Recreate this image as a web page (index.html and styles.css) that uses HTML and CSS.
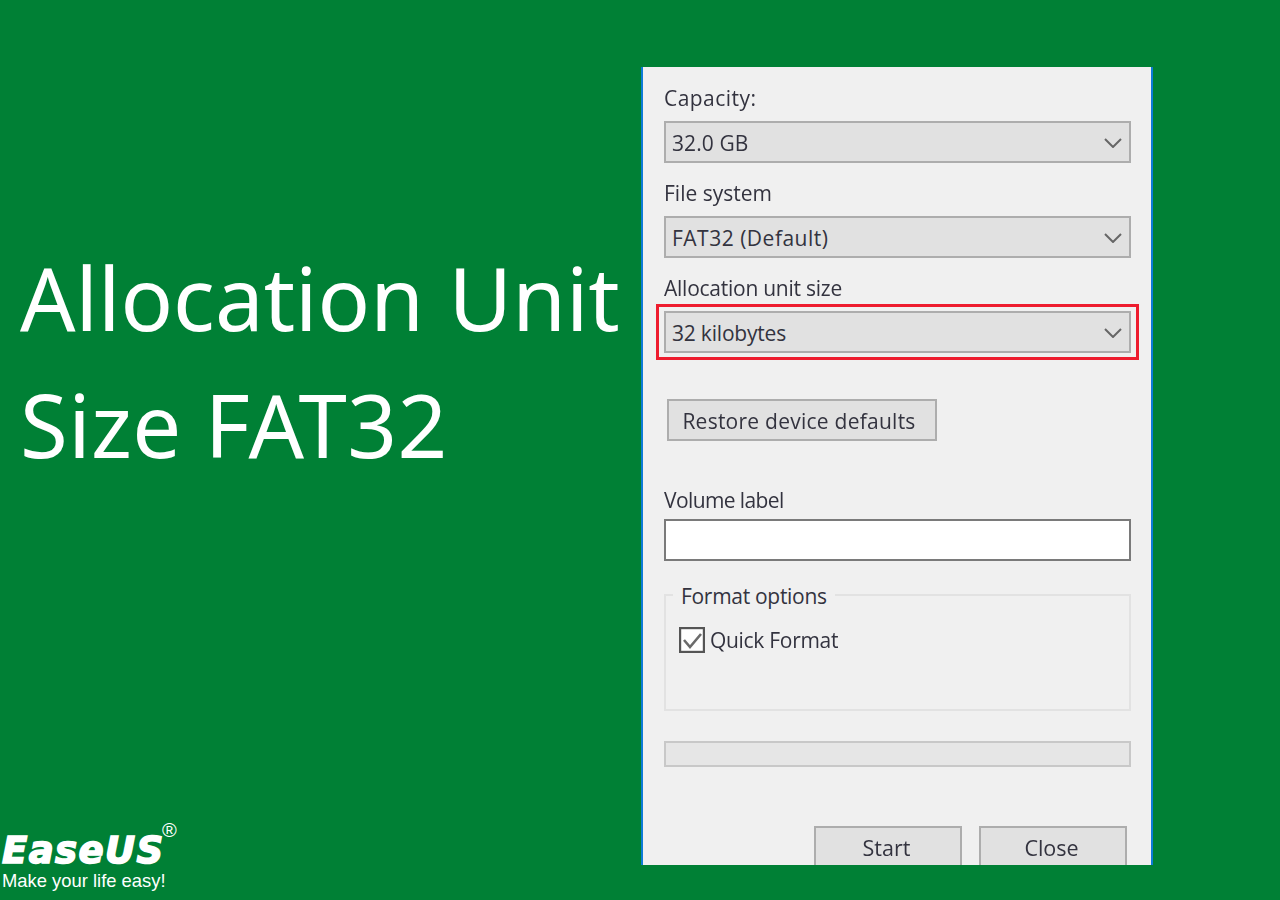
FILE: index.html
```html
<!DOCTYPE html>
<html lang="en">
<head>
<meta charset="utf-8">
<title>Allocation Unit Size FAT32</title>
<link rel="stylesheet" href="styles.css">
</head>
<body>
<main class="page">
  <section class="intro">
    <h1 class="title">Allocation Unit<br><span class="title-second">Size FAT32</span></h1>
    <div class="brand">
      <div class="brand-name">EaseUS<sup class="brand-reg">®</sup></div>
      <div class="brand-tag">Make your life easy!</div>
    </div>
  </section>
  <section class="dialog">
    <div class="dialog-inner">
      <div class="label label-first label-capacity">Capacity:</div>
      <div class="select"><span class="value-capacity">32.0 GB</span><svg class="chev" viewBox="0 0 18 10"><path d="M1 1l8 8 8-8"/></svg></div>
      <div class="label label-file">File system</div>
      <div class="select"><span class="value-fs">FAT32 (Default)</span><svg class="chev" viewBox="0 0 18 10"><path d="M1 1l8 8 8-8"/></svg></div>
      <div class="label">Allocation unit size</div>
      <div class="select select-marked"><span>32 kilobytes</span><svg class="chev" viewBox="0 0 18 10"><path d="M1 1l8 8 8-8"/></svg></div>
      <div class="btn btn-restore">Restore device defaults</div>
      <div class="label label-volume">Volume label</div>
      <div class="textbox"></div>
      <div class="group">
        <div class="legend">Format options</div>
        <div class="check-row">
          <svg class="check" viewBox="0 0 26 26"><rect x="1" y="1" width="24" height="24"/><path d="M5 13l6 7 11-13"/></svg>
          <span>Quick Format</span>
        </div>
      </div>
      <div class="progress"></div>
      <div class="actions">
        <div class="btn btn-action">Start</div>
        <div class="btn btn-action">Close</div>
      </div>
    </div>
  </section>
</main>
</body>
</html>
```
FILE: styles.css
```css
* { box-sizing: border-box; }
html, body { margin: 0; padding: 0; }
body { background: #008035; }
.page {
  width: 1280px;
  height: 900px;
  background: #008035;
  display: flex;
  overflow: hidden;
  font-family: "Noto Sans", "Open Sans", sans-serif;
}
.intro {
  width: 641px;
  flex: none;
  display: flex;
  flex-direction: column;
  justify-content: space-between;
  padding: 234px 0 8px 0;
}
.title {
  margin: 0;
  padding-left: 20px;
  font-weight: 400;
  font-size: 87px;
  line-height: 127px;
  color: #fff;
  white-space: nowrap;
  word-spacing: 2px;
}
.title-second { letter-spacing: 0.4px; word-spacing: 0; }
.brand { padding-left: 2px; color: #fff; }
.brand-name {
  font-family: "DejaVu Sans", sans-serif;
  font-weight: 700;
  font-style: italic;
  font-size: 37px;
  line-height: 38px;
  letter-spacing: 1.4px;
  -webkit-text-stroke: 1.6px #fff;
  position: relative;
}
.brand-reg {
  position: absolute;
  left: 160px;
  top: -12px;
  font-family: "Liberation Sans", sans-serif;
  font-style: normal;
  font-weight: 400;
  font-size: 20px;
  line-height: 20px;
  letter-spacing: 0;
  -webkit-text-stroke: 0;
}
.brand-tag {
  font-family: "Liberation Sans", sans-serif;
  font-size: 18.4px;
  line-height: 22px;
}
.dialog {
  margin-top: 67px;
  width: 512px;
  height: 798px;
  flex: none;
  background: #f0f0f0;
  border-left: 2px solid #0d7bd6;
  border-right: 2px solid #0d7bd6;
  overflow: hidden;
}
.dialog-inner {
  padding: 0 20px 0 21px;
  color: #33333f;
  font-family: "Open Sans", "Noto Sans", sans-serif;
  font-size: 21px;
  filter: blur(0.7px);
}
.label {
  height: 30px;
  line-height: 30px;
  margin-top: 15px;
  white-space: nowrap;
  letter-spacing: -0.25px;
}
.label-first { margin-top: 16px; }
.label-capacity { letter-spacing: 0.45px; }
.label-file { letter-spacing: 0; }
.label-volume {
  margin-top: 42px;
  height: 36px;
  line-height: 34px;
  letter-spacing: -0.6px;
}
.select {
  height: 42px;
  display: flex;
  align-items: center;
  justify-content: space-between;
  padding: 2px 7px 0 6px;
  background: #e1e1e1;
  border: 2px solid #adadad;
  letter-spacing: -0.2px;
  margin-top: 8px;
  position: relative;
}
.value-capacity { letter-spacing: 0.1px; }
.value-fs { letter-spacing: 0.5px; }
.select-marked::after {
  content: "";
  position: absolute;
  left: -10px;
  right: -10px;
  top: -9px;
  bottom: -9px;
  border: 3px solid #ee1c2e;
}
.chev { width: 18px; height: 10px; flex: none; }
.chev path { fill: none; stroke: #666; stroke-width: 2; }
.btn {
  height: 42px;
  padding-top: 2px;
  background: #e1e1e1;
  border: 2px solid #adadad;
  display: flex;
  align-items: center;
  justify-content: center;
  white-space: nowrap;
}
.btn-restore { width: 270px; margin: 46px 0 0 3px; letter-spacing: 0.25px; padding-right: 6px; }
.textbox {
  height: 42px;
  background: #fff;
  border: 2px solid #7a7a7a;
}
.group {
  height: 117px;
  margin-top: 33px;
  border: 2px solid #e2e2e2;
  position: relative;
}
.legend {
  position: absolute;
  left: 7px;
  top: -15px;
  padding: 0 8px;
  height: 30px;
  line-height: 30px;
  background: #f0f0f0;
  letter-spacing: -0.3px;
  white-space: nowrap;
}
.check-row {
  display: flex;
  align-items: center;
  gap: 5px;
  padding: 30px 0 0 13px;
  letter-spacing: -0.3px;
}
.check { width: 26px; height: 26px; flex: none; }
.check rect { fill: #fff; stroke: #555; stroke-width: 2.4; }
.check path { fill: none; stroke: #6b6b6b; stroke-width: 2.6; }
.progress {
  height: 26px;
  margin-top: 30px;
  background: #e6e6e6;
  border: 2px solid #c8c8c8;
}
.actions {
  display: flex;
  justify-content: flex-end;
  gap: 17px;
  margin-top: 59px;
  padding-right: 4px;
}
.btn-action { width: 148px; padding: 0 3px 0 0; font-size: 21.5px; }
```
